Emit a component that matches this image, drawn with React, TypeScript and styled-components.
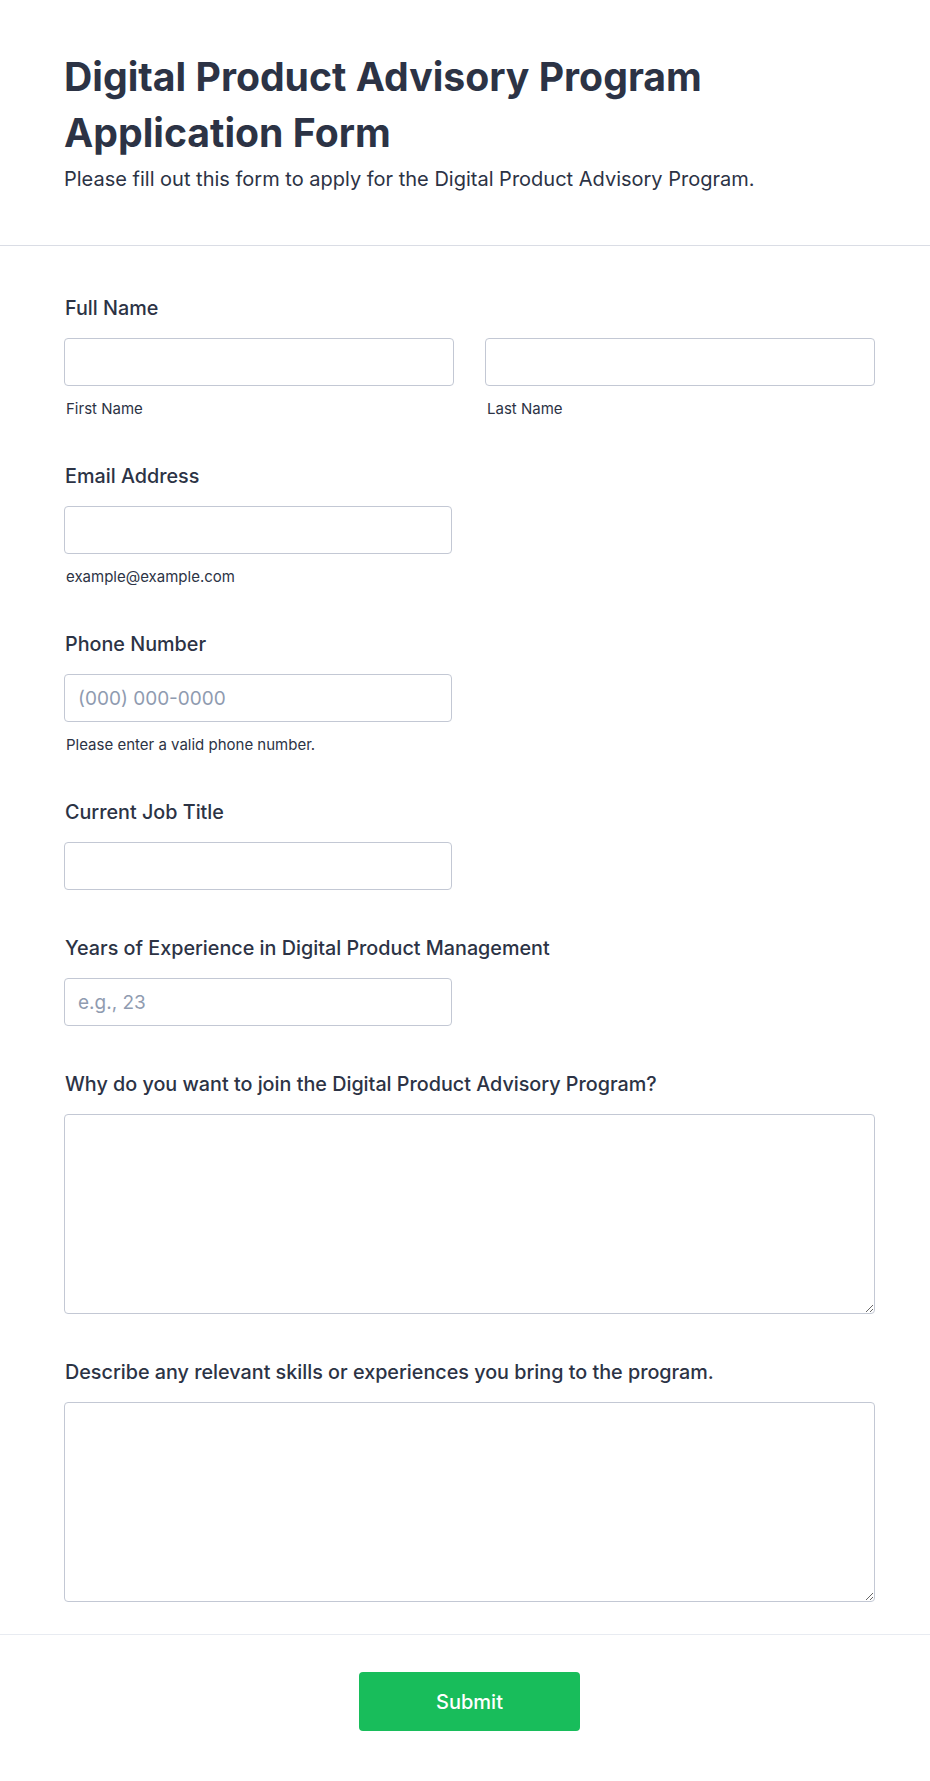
import React from 'react';
import styled, { createGlobalStyle } from 'styled-components';

const GlobalStyle = createGlobalStyle`
  body {
    margin: 0;
    background: #ffffff;
    font-family: Inter, 'Noto Sans', sans-serif;
    color: #2c3345;
  }
  * {
    box-sizing: border-box;
  }
`;

const S = {
  Page: styled.div`
    width: 930px;
    background: #ffffff;
  `,
  Header: styled.header`
    padding: 49px 55px 52px 64px;
    border-bottom: 1px solid #dadde5;
  `,
  Title: styled.h1`
    margin: 0;
    font-size: 39.2px;
    line-height: 56px;
    font-weight: 700;
    color: #2c3345;
  `,
  Subtitle: styled.p`
    margin: 5px 0 0;
    font-size: 20px;
    line-height: 27px;
    font-weight: 400;
    color: #2c3345;
  `,
  Body: styled.form`
    padding: 50px 55px 32px 64px;
    display: flex;
    flex-direction: column;
    gap: 46px;
  `,
  Field: styled.div`
    display: flex;
    flex-direction: column;
  `,
  Label: styled.label`
    font-size: 19.75px;
    line-height: 24px;
    font-weight: 500;
    color: #2c3345;
    padding-left: 1px;
    margin-bottom: 18px;
  `,
  Row: styled.div`
    display: grid;
    grid-template-columns: 390px 390px;
    column-gap: 31px;
  `,
  Cell: styled.div`
    display: flex;
    flex-direction: column;
  `,
  Input: styled.input<{ $width?: string }>`
    width: ${({ $width }) => $width || '388px'};
    height: 48px;
    border: 1px solid #c3c8d4;
    border-radius: 4px;
    padding: 0 13px;
    font-family: Inter, sans-serif;
    font-size: 19px;
    color: #2c3345;
    background: #ffffff;
    outline: none;
    &::placeholder {
      color: #8f9bb0;
    }
  `,
  TextArea: styled.textarea`
    width: 811px;
    height: 200px;
    border: 1px solid #c3c8d4;
    border-radius: 4px;
    padding: 10px 13px;
    font-family: Inter, sans-serif;
    font-size: 19px;
    color: #2c3345;
    outline: none;
    resize: vertical;
  `,
  SubLabel: styled.span`
    margin-top: 14px;
    padding-left: 2px;
    font-size: 15px;
    line-height: 18px;
    color: #2c3345;
  `,
  Footer: styled.div`
    border-top: 1px solid #e8ebf1;
    padding: 37px 55px 50px 64px;
    display: flex;
    justify-content: center;
  `,
  Submit: styled.button`
    width: 221px;
    height: 59px;
    border: none;
    border-radius: 4px;
    background: #18bd5b;
    color: #ffffff;
    font-family: Inter, sans-serif;
    font-size: 20px;
    font-weight: 500;
    cursor: pointer;
  `,
};

const App = () => {
  const simpleFields = [
    { label: 'Email Address', placeholder: '', sub: 'example@example.com' },
    { label: 'Phone Number', placeholder: '(000) 000-0000', sub: 'Please enter a valid phone number.' },
    { label: 'Current Job Title', placeholder: '', sub: '' },
    { label: 'Years of Experience in Digital Product Management', placeholder: 'e.g., 23', sub: '' },
  ];

  const longFields = [
    'Why do you want to join the Digital Product Advisory Program?',
    'Describe any relevant skills or experiences you bring to the program.',
  ];

  return (
    <S.Page>
      <GlobalStyle />
      <S.Header>
        <S.Title>Digital Product Advisory Program Application Form</S.Title>
        <S.Subtitle>Please fill out this form to apply for the Digital Product Advisory Program.</S.Subtitle>
      </S.Header>
      <S.Body onSubmit={(e) => e.preventDefault()}>
        <S.Field>
          <S.Label>Full Name</S.Label>
          <S.Row>
            <S.Cell>
              <S.Input $width="390px" />
              <S.SubLabel>First Name</S.SubLabel>
            </S.Cell>
            <S.Cell>
              <S.Input $width="390px" />
              <S.SubLabel>Last Name</S.SubLabel>
            </S.Cell>
          </S.Row>
        </S.Field>
        {simpleFields.map((field) => (
          <S.Field key={field.label}>
            <S.Label>{field.label}</S.Label>
            <S.Input placeholder={field.placeholder} />
            {field.sub && <S.SubLabel>{field.sub}</S.SubLabel>}
          </S.Field>
        ))}
        {longFields.map((label) => (
          <S.Field key={label}>
            <S.Label>{label}</S.Label>
            <S.TextArea />
          </S.Field>
        ))}
      </S.Body>
      <S.Footer>
        <S.Submit type="button">Submit</S.Submit>
      </S.Footer>
    </S.Page>
  );
};

export default App;
